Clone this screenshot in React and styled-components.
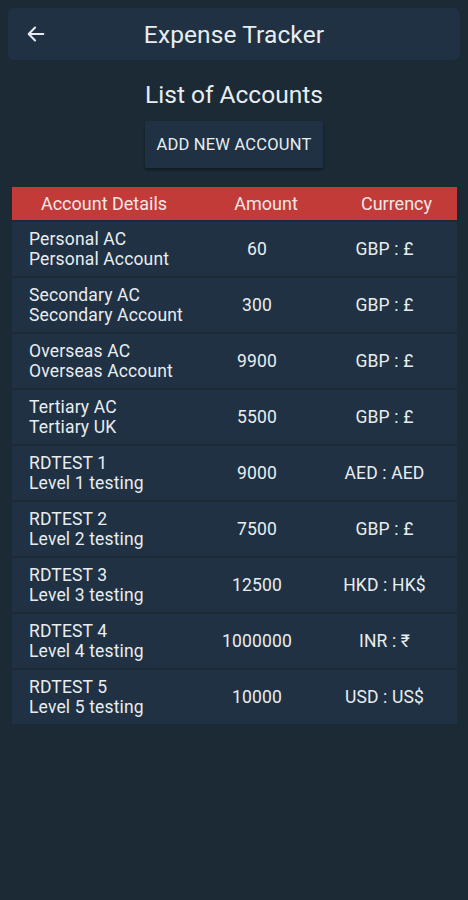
import React from 'react';
import styled, { createGlobalStyle } from 'styled-components';

const GlobalStyle = createGlobalStyle`
  html, body {
    margin: 0;
    padding: 0;
    background: #1b2a35;
  }
  body {
    font-family: Roboto, "Noto Sans", "Liberation Sans", sans-serif;
    color: #e8edf1;
  }
`;

const Screen = styled.div`
  width: 468px;
  min-height: 900px;
  background: #1b2a35;
  padding: 8px 0 0;
  box-sizing: border-box;
`;

const TopBar = styled.header`
  display: flex;
  align-items: center;
  margin: 0 8px;
  height: 52px;
  background: #1f3142;
  border-radius: 6px;
  position: relative;
`;

const BackButton = styled.button`
  display: flex;
  align-items: center;
  justify-content: center;
  width: 40px;
  height: 40px;
  margin-left: 8px;
  padding: 0;
  border: none;
  background: transparent;
  color: #e6ebef;
`;

const Title = styled.h1`
  position: absolute;
  left: 0;
  right: 0;
  margin: 0;
  text-align: center;
  font-size: 24.5px;
  font-weight: 400;
  letter-spacing: 0.1px;
  pointer-events: none;
`;

const Heading = styled.h2`
  margin: 20px 0 0;
  text-align: center;
  font-size: 24.5px;
  font-weight: 400;
  line-height: 30px;
`;

const ButtonRow = styled.div`
  display: flex;
  justify-content: center;
  margin-top: 11px;
`;

const AddButton = styled.button`
  height: 47px;
  width: 178px;
  padding: 0;
  background: #1f3142;
  color: #e8edf1;
  border: none;
  border-radius: 2px;
  box-shadow: 0 2px 3px rgba(0, 0, 0, 0.35);
  font-family: inherit;
  font-size: 16.5px;
  font-weight: 400;
  letter-spacing: 0.2px;
  text-transform: uppercase;
`;

const Table = styled.div`
  margin: 19px 11px 0 12px;
  display: flex;
  flex-direction: column;
  gap: 2px;
`;

const HeaderRow = styled.div`
  display: grid;
  grid-template-columns: 184px 140px 1fr;
  align-items: center;
  height: 33px;
  background: #c23b39;
  font-size: 18px;
  color: #f3e6e6;
`;

const HeaderCell = styled.div`
  text-align: center;
`;

const Row = styled.div`
  display: grid;
  grid-template-columns: 190px 110px 1fr;
  align-items: center;
  height: 54px;
  background: #1f3142;
  font-size: 17.5px;
  letter-spacing: 0.15px;
  line-height: 20px;
`;

const Details = styled.div`
  padding-left: 17px;
  display: flex;
  flex-direction: column;
`;

const Cell = styled.div`
  text-align: center;
`;

const accounts = [
  ['Personal AC', 'Personal Account', '60', 'GBP : £'],
  ['Secondary AC', 'Secondary Account', '300', 'GBP : £'],
  ['Overseas AC', 'Overseas Account', '9900', 'GBP : £'],
  ['Tertiary AC', 'Tertiary UK', '5500', 'GBP : £'],
  ['RDTEST 1', 'Level 1 testing', '9000', 'AED : AED'],
  ['RDTEST 2', 'Level 2 testing', '7500', 'GBP : £'],
  ['RDTEST 3', 'Level 3 testing', '12500', 'HKD : HK$'],
  ['RDTEST 4', 'Level 4 testing', '1000000', 'INR : ₹'],
  ['RDTEST 5', 'Level 5 testing', '10000', 'USD : US$'],
];

const ArrowIcon = () => (
  <svg width="22" height="22" viewBox="0 0 24 24" fill="none" stroke="currentColor" strokeWidth="2.2" strokeLinecap="round" strokeLinejoin="round">
    <path d="M20 12H4.5" />
    <path d="M11 5l-7 7 7 7" />
  </svg>
);

export default function App() {
  return (
    <>
      <GlobalStyle />
      <Screen>
        <TopBar>
          <BackButton aria-label="Back">
            <ArrowIcon />
          </BackButton>
          <Title>Expense Tracker</Title>
        </TopBar>

        <Heading>List of Accounts</Heading>
        <ButtonRow>
          <AddButton>Add New Account</AddButton>
        </ButtonRow>

        <Table>
          <HeaderRow>
            <HeaderCell>Account Details</HeaderCell>
            <HeaderCell>Amount</HeaderCell>
            <HeaderCell>Currency</HeaderCell>
          </HeaderRow>
          {accounts.map(([name, desc, amount, currency]) => (
            <Row key={name}>
              <Details>
                <span>{name}</span>
                <span>{desc}</span>
              </Details>
              <Cell>{amount}</Cell>
              <Cell>{currency}</Cell>
            </Row>
          ))}
        </Table>
      </Screen>
    </>
  );
}
